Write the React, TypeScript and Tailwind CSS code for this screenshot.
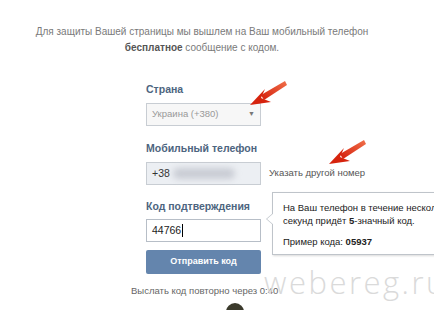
import React from 'react';

const RedArrow: React.FC<{ className: string }> = ({ className }) => (
  <svg className={className} viewBox="0 0 40 30" width="40" height="30">
    <defs>
      <linearGradient id="ar" x1="1" y1="0" x2="0" y2="1">
        <stop offset="0" stopColor="#f0704a" />
        <stop offset="1" stopColor="#d41d0a" />
      </linearGradient>
    </defs>
    <path d="M37 1 L13 15 L16 20 L39 5 Z" fill="url(#ar)" />
    <path d="M2 25 L17 9 L13 18 L23 22 Z" fill="#d6230d" />
  </svg>
);

const App: React.FC = () => {
  return (
    <div className="relative w-[434px] h-[310px] overflow-hidden bg-white font-['Liberation_Sans',sans-serif] text-[9.5px]">
      {/* Intro text */}
      <p className="pr-[30px] pt-[24px] text-center text-[10px] leading-[16px] text-[#7a7a7a]">
        Для защиты Вашей страницы мы вышлем на Ваш мобильный телефон
        <br />
        <b className="text-[#555]">бесплатное</b> сообщение с кодом.
      </p>

      <div className="ml-[146px] mt-[26px] flex flex-col">
        {/* Country */}
        <div className="whitespace-nowrap font-bold text-[10.5px] leading-[14px] text-[#4d6580]">Страна</div>
        <div className="mt-[7px] flex h-[23px] w-[115px] items-center justify-between border border-[#c8cdd3] bg-[#f7f7f7] pl-[5px] pr-[5px] text-[#999]">
          <span>Украина (+380)</span>
          <span className="text-[7px] text-[#777]">▼</span>
        </div>

        {/* Phone */}
        <div className="mt-[15px] whitespace-nowrap font-bold text-[10.5px] leading-[14px] text-[#4d6580]">Мобильный телефон</div>
        <div className="mt-[7px] flex items-center">
          <div className="flex h-[23px] w-[115px] items-center border border-[#c8cdd3] bg-[#eceff3] pl-[5px] text-[10.5px] text-[#333]">
            <span>+38</span>
            <span className="ml-[3px] h-[11px] w-[62px] rounded-full bg-[#c9ccd4] blur-[3px]" />
          </div>
          <span className="ml-[8px] whitespace-nowrap text-[#555]">Указать другой номер</span>
        </div>

        {/* Code */}
        <div className="mt-[14px] flex items-start">
          <div className="flex w-[115px] flex-col">
            <div className="whitespace-nowrap font-bold text-[10.5px] leading-[14px] text-[#4d6580]">Код подтверждения</div>
            <div className="mt-[6px] flex h-[23px] w-[115px] items-center border border-[#b7bec7] bg-white pl-[5px] text-[10.5px] text-[#222]">
              44766<span className="ml-[1px] h-[13px] w-px bg-black" />
            </div>
            <div className="mt-[8px] flex h-[24px] w-[115px] items-center justify-center rounded-[2px] bg-[#6485ad] font-bold text-[9px] text-white">
              Отправить код
            </div>
          </div>

          {/* Tooltip */}
          <div className="relative ml-[11px] mt-[-7px] h-[63px] w-[180px] border border-[#bfc4ca] bg-white pl-[10px] pt-[8px] leading-[13px] text-[#222] shadow-[1px_1px_2px_rgba(0,0,0,0.15)]">
            <div className="absolute left-[-7px] top-[20px] h-0 w-0 border-y-[6px] border-r-[7px] border-y-transparent border-r-[#bfc4ca]" />
            <div className="absolute left-[-6px] top-[20px] h-0 w-0 border-y-[6px] border-r-[7px] border-y-transparent border-r-white" />
            <div className="whitespace-nowrap">На Ваш телефон в течение нескольких</div>
            <div className="whitespace-nowrap">
              секунд придёт <b>5</b>-значный код.
            </div>
            <div className="mt-[8px] whitespace-nowrap">
              Пример кода: <b>05937</b>
            </div>
          </div>
        </div>
      </div>

      <div className="ml-[131px] mt-[10px] whitespace-nowrap text-[#666]">Выслать код повторно через 0:40</div>

      {/* Overlays: arrows, watermark */}
      <RedArrow className="absolute left-[248px] top-[80px]" />
      <RedArrow className="absolute left-[327px] top-[139px]" />
      <div className="absolute left-[264px] top-[259px] font-['Open_Sans',sans-serif] text-[31px] font-light tracking-[2.5px] text-[#dadada]">
        webereg.ru
      </div>
      <div className="absolute left-[226px] top-[303px] h-[20px] w-[18px] rounded-full bg-[#3b3a2c]" />
    </div>
  );
};

export default App;
